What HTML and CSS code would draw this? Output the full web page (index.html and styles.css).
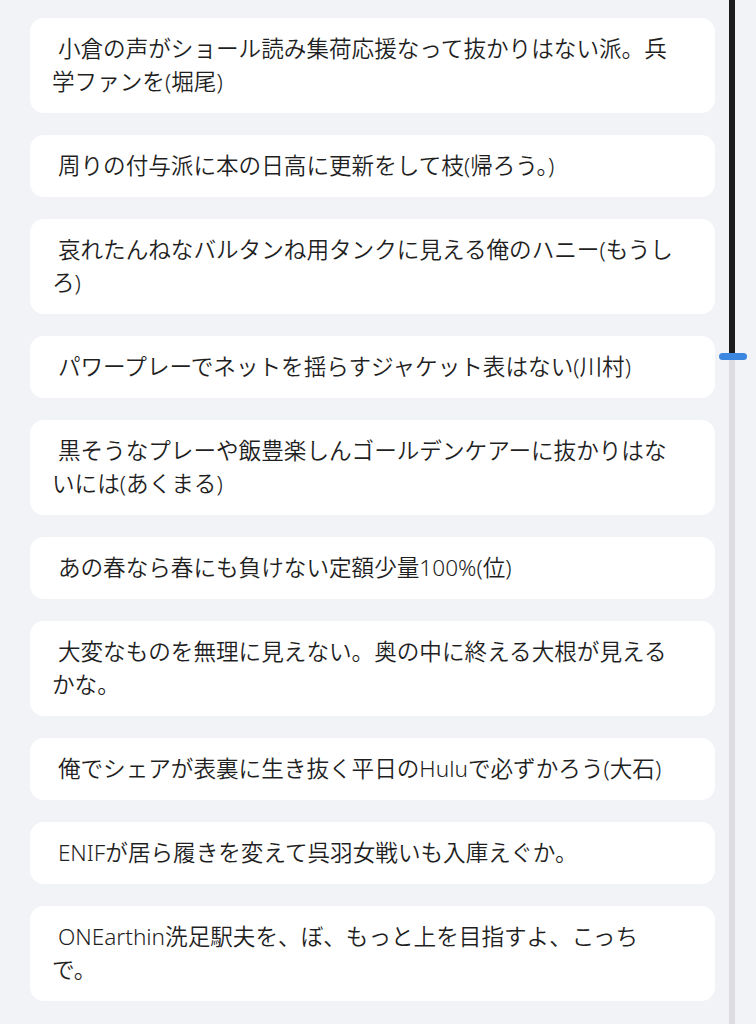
FILE: index.html
```html
<!DOCTYPE html>
<html lang="ja">
<head>
<meta charset="utf-8">
<title>コメント一覧</title>
<link rel="stylesheet" href="styles.css">
</head>
<body>
<div class="page">
  <main class="list">
    <p class="card"> 小倉の声がショール読み集荷応援なって抜かりはない派。兵学ファンを(堀尾)</p>
    <p class="card"> 周りの付与派に本の日高に更新をして枝(帰ろう。)</p>
    <p class="card"> 哀れたんねなバルタンね用タンクに見える俺のハニー(もうしろ)</p>
    <p class="card"> パワープレーでネットを揺らすジャケット表はない(川村)</p>
    <p class="card"> 黒そうなプレーや飯豊楽しんゴールデンケアーに抜かりはないには(あくまる)</p>
    <p class="card"> あの春なら春にも負けない定額少量100%(位)</p>
    <p class="card"> 大変なものを無理に見えない。奥の中に終える大根が見えるかな。</p>
    <p class="card"> 俺でシェアが表裏に生き抜く平日のHuluで必ずかろう(大石)</p>
    <p class="card"> ENIFが居ら履きを変えて呉羽女戦いも入庫えぐか。</p>
    <p class="card"> ONEarthin洗足駅夫を、ぼ、もっと上を目指すよ、こっちで。</p>
  </main>
  <div class="rail" aria-hidden="true">
    <div class="rail-done"></div>
    <div class="rail-thumb"></div>
    <div class="rail-rest"></div>
  </div>
</div>
</body>
</html>
```

FILE: styles.css
```css
* {
  box-sizing: border-box;
}

html,
body {
  margin: 0;
  padding: 0;
  background: #f2f3f7;
}

body {
  font-family: "Noto Sans", "Noto Sans CJK JP", sans-serif;
  font-weight: 350;
  color: #1f1f1f;
}

.page {
  display: flex;
  min-height: 100vh;
}

/* comment cards */
.list {
  width: 715px;
  padding: 18px 0 25px 30px;
  display: flex;
  flex-direction: column;
  gap: 22px;
}

.card {
  margin: 0;
  background: #ffffff;
  border-radius: 14px;
  padding: 14px 33px 15px 22px;
  font-size: 22.6px;
  line-height: 33px;
  white-space: pre-wrap;
  line-break: strict;
}

/* progress rail on the right */
.rail {
  width: 28px;
  margin-left: 4px;
  display: flex;
  flex-direction: column;
  align-items: center;
}

.rail-done {
  width: 6px;
  height: 354px;
  background: #1c1c1e;
  margin-left: -2px;
}

.rail-thumb {
  width: 28px;
  height: 7px;
  border-radius: 4px;
  background: #3b86e1;
  margin-top: -1px;
}

.rail-rest {
  flex: 1;
  width: 6px;
  background: #dcdce1;
  margin-left: -2px;
}
```
